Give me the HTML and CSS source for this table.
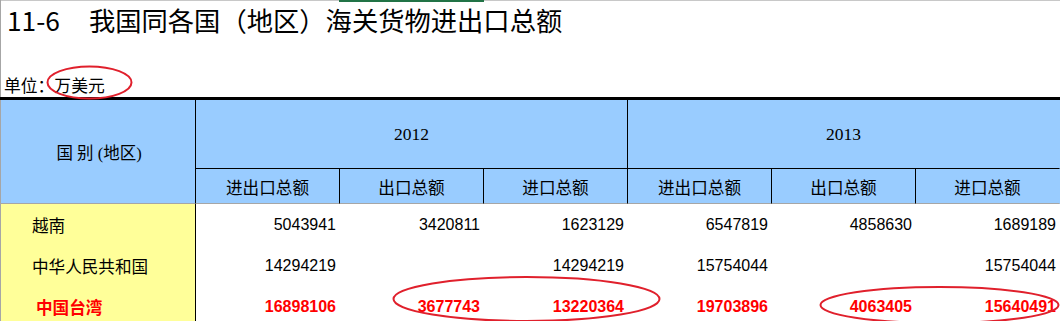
FILE: index.html
```html
<!DOCTYPE html>
<html lang="zh-CN">
<head>
<meta charset="utf-8">
<title>11-6 我国同各国(地区)海关货物进出口总额</title>
<link rel="stylesheet" href="styles.css">
</head>
<body>
<div class="sheet">
  <div class="topline"></div>
  <h1 class="title"><span class="title-no">11-6</span><span class="title-text">我国同各国（地区）海关货物进出口总额</span></h1>
  <div class="unit">单位：万美元</div>
  <div class="grid">
    <div class="h-region"><span class="region-label"><span class="cjk">国</span> <span class="cjk">别</span> (<span class="cjk">地区</span>)</span></div>
    <div class="h-year">2012</div>
    <div class="h-year">2013</div>
    <div class="h-sub">进出口总额</div>
    <div class="h-sub">出口总额</div>
    <div class="h-sub">进口总额</div>
    <div class="h-sub">进出口总额</div>
    <div class="h-sub">出口总额</div>
    <div class="h-sub last">进口总额</div>

    <div class="c-name">越南</div>
    <div class="c-num">5043941</div>
    <div class="c-num">3420811</div>
    <div class="c-num">1623129</div>
    <div class="c-num">6547819</div>
    <div class="c-num">4858630</div>
    <div class="c-num">1689189</div>

    <div class="c-name">中华人民共和国</div>
    <div class="c-num">14294219</div>
    <div class="c-num"></div>
    <div class="c-num">14294219</div>
    <div class="c-num">15754044</div>
    <div class="c-num"></div>
    <div class="c-num">15754044</div>

    <div class="c-name hl">中国台湾</div>
    <div class="c-num hl">16898106</div>
    <div class="c-num hl">3677743</div>
    <div class="c-num hl">13220364</div>
    <div class="c-num hl">19703896</div>
    <div class="c-num hl">4063405</div>
    <div class="c-num hl">15640491</div>
  </div>
  <svg class="marks" width="1060" height="321" viewBox="0 0 1060 321" aria-hidden="true">
    <ellipse cx="89.5" cy="82.5" rx="42" ry="16" />
    <ellipse cx="526.5" cy="299" rx="133" ry="22" />
    <ellipse cx="939.5" cy="305" rx="119" ry="18" />
  </svg>
</div>
</body>
</html>
```
FILE: styles.css
```css
html, body {
  margin: 0;
  padding: 0;
  background: #ffffff;
}
body {
  width: 1060px;
  height: 321px;
  overflow: hidden;
  font-family: "Noto Sans CJK SC", "Liberation Sans", sans-serif;
  color: #000;
}
.sheet {
  position: relative;
  width: 1060px;
  height: 321px;
  box-sizing: border-box;
  border-left: 1px solid #a6a6a6;
}
.topline {
  height: 2px;
  background:
    linear-gradient(to right, transparent 338px, #217346 338px, #217346 483px, transparent 483px),
    linear-gradient(#c8c8c8 0 1px, transparent 1px);
}
.title {
  margin: 0;
  display: flex;
  gap: 29px;
  padding-left: 6px;
  font-family: "Noto Sans CJK SC", sans-serif;
  font-weight: 400;
  font-size: 26.3px;
  line-height: 36px;
  height: 36px;
  white-space: nowrap;
}
.unit {
  padding: 36px 0 1px 3px;
  font-size: 16.8px;
  line-height: 22px;
  height: 22px;
}
.grid {
  display: grid;
  grid-template-columns: 196px repeat(6, 144px);
  grid-template-rows: 69px 35px 41px 41px 41px;
  border-top: 3px solid #000;
  margin-left: -1px;
}
.grid > div {
  box-sizing: border-box;
  display: flex;
  align-items: center;
  white-space: nowrap;
}
.h-region {
  grid-row: 1 / 3;
  background: #99ccff;
  border-left: 1px solid #a6a6a6;
  border-right: 1px solid #000;
  border-bottom: 1px solid #a6a6a6;
  justify-content: center;
  padding-left: 2px;
}
.region-label {
  font-family: "Liberation Serif", "Noto Sans CJK SC", serif;
  font-size: 16.5px;
  white-space: pre;
}
.region-label .cjk {
  font-family: "Noto Sans CJK SC", sans-serif;
}
.h-year {
  grid-column: span 3;
  background: #99ccff;
  border-right: 1px solid #000;
  border-bottom: 1px solid #000;
  justify-content: center;
  font-family: "Liberation Serif", serif;
  font-size: 17.5px;
}
.h-sub {
  background: #99ccff;
  border-right: 1px solid #000;
  border-bottom: 1px solid #a6a6a6;
  justify-content: center;
  font-size: 16.6px;
  padding-top: 1px;
}
.h-year:nth-child(3),
.h-sub.last {
  border-right-color: #99ccff;
}
.c-name {
  background: #ffff99;
  border-left: 1px solid #a6a6a6;
  border-right: 1px solid #000;
  padding-left: 31px;
  font-size: 16.6px;
}
.c-num {
  justify-content: flex-end;
  padding-right: 4px;
  font-family: "Liberation Sans", sans-serif;
  font-size: 16px;
  padding-top: 1px;
}
.hl {
  color: #ff0000;
  font-weight: 700;
}
.c-name.hl {
  padding-left: 35px;
}
.marks {
  position: absolute;
  left: -1px;
  top: 0;
  pointer-events: none;
}
.marks ellipse {
  fill: none;
  stroke: #e0202c;
  stroke-width: 2;
}
```
